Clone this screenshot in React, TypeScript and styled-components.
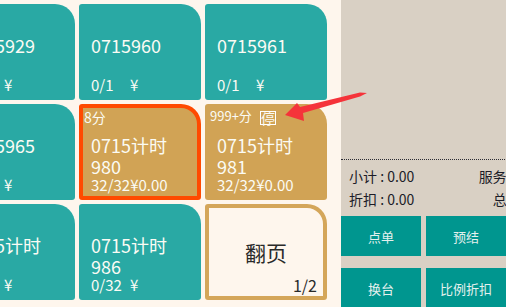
import React from "react";
import styled, { createGlobalStyle } from "styled-components";

type TableInfo = {
  id: string;
  lines: string[];
  count: string;
  amount?: string;
  busy?: boolean;
  selected?: boolean;
  minutes?: string;
  paused?: boolean;
};

const tables: TableInfo[] = [
  { id: "929", lines: ["0715929"], count: "0/1" },
  { id: "960", lines: ["0715960"], count: "0/1" },
  { id: "961", lines: ["0715961"], count: "0/1" },
  { id: "965", lines: ["0715965"], count: "0/1" },
  {
    id: "980",
    lines: ["0715计时", "980"],
    count: "32/32",
    amount: "0.00",
    busy: true,
    selected: true,
    minutes: "8分",
  },
  {
    id: "981",
    lines: ["0715计时", "981"],
    count: "32/32",
    amount: "0.00",
    busy: true,
    minutes: "999+分",
    paused: true,
  },
  { id: "985", lines: ["0715计时", "985"], count: "0/32" },
  { id: "986", lines: ["0715计时", "986"], count: "0/32" },
];

const actions = ["点单", "预结", "结账", "换台", "比例折扣", "更多"];

const TableTile: React.FC<{ table: TableInfo }> = ({ table }) => {
  const { lines, count, amount, busy, selected, minutes, paused } = table;
  const long = (minutes ?? "").length > 3;
  return (
    <Tile $busy={busy} $selected={selected}>
      <BadgeRow>
        {minutes && <Minutes $small={long}>{minutes}</Minutes>}
        {paused && <StopMark>停</StopMark>}
      </BadgeRow>
      <Name>
        {lines.map((line) => (
          <div key={line}>{line}</div>
        ))}
      </Name>
      <Footer>
        <Count>{count}</Count>
        <span>¥{amount}</span>
      </Footer>
    </Tile>
  );
};

const App: React.FC = () => {
  return (
    <>
      <GlobalStyle />
      <Screen>
        <TableArea>
          <TileGrid>
            {tables.map((t) => (
              <TableTile key={t.id} table={t} />
            ))}
            <PageTile>
              <PageLabel>翻页</PageLabel>
              <PageCount>1/2</PageCount>
            </PageTile>
          </TileGrid>
        </TableArea>

        <Panel>
          <PanelInner>
            <OrderList />
            <Summary>
              <span>小计 : 0.00</span>
              <RightCell>服务费 : 0.00</RightCell>
              <span>折扣 : 0.00</span>
              <RightCell>总计 : 0.00</RightCell>
            </Summary>
            <ActionGrid>
              {actions.map((a) => (
                <ActionButton key={a}>{a}</ActionButton>
              ))}
            </ActionGrid>
          </PanelInner>
        </Panel>

        <Pointer width="92" height="36" viewBox="0 0 92 36">
          <polygon
            points="5,27 17,15 20,19 80,4.5 87,5 80,8.5 23,25 24,33"
            fill="#f5333a"
          />
        </Pointer>
      </Screen>
    </>
  );
};

const GlobalStyle = createGlobalStyle`
  html, body {
    margin: 0;
    padding: 0;
    background: #fef6ed;
  }
  body {
    font-family: "Noto Sans CJK SC", "Noto Sans", sans-serif;
  }
`;

const Screen = styled.div`
  position: relative;
  display: flex;
  width: 506px;
  height: 307px;
  overflow: hidden;
  background: #fef6ed;
`;

const TableArea = styled.main`
  width: 341px;
  flex-shrink: 0;
  overflow: hidden;
`;

const TileGrid = styled.div`
  display: grid;
  grid-template-columns: repeat(3, 122px);
  grid-auto-rows: 96px;
  gap: 4px;
  padding-top: 4px;
  margin-left: -47px;
`;

const Tile = styled.div<{ $busy?: boolean; $selected?: boolean }>`
  box-sizing: border-box;
  display: flex;
  flex-direction: column;
  background: ${({ $busy }) => ($busy ? "#d1a355" : "#29a9a4")};
  border: 4px solid ${({ $selected }) => ($selected ? "#ff4a00" : "transparent")};
  border-radius: 3px 20px 3px 3px;
  padding: 0 2px 0 1px;
  color: #fbfbf4;
  overflow: hidden;
`;

const BadgeRow = styled.div`
  display: flex;
  align-items: flex-start;
  height: 21px;
  flex-shrink: 0;
`;

const Minutes = styled.span<{ $small?: boolean }>`
  font-size: ${({ $small }) => ($small ? "13px" : "14px")};
  line-height: ${({ $small }) => ($small ? "16px" : "19px")};
  white-space: nowrap;
`;

const StopMark = styled.span`
  box-sizing: content-box;
  width: 14px;
  height: 12px;
  margin: 3px 0 0 8px;
  border: 1px solid #ffffff;
  font-size: 14px;
  line-height: 12px;
  text-align: center;
`;

const Name = styled.div`
  margin-top: 6px;
  padding-left: 7px;
  font-size: 18px;
  line-height: 21px;
  white-space: nowrap;
`;

const Footer = styled.div`
  display: flex;
  margin-top: auto;
  padding: 0 0 4px 7px;
  font-size: 15px;
  line-height: 15px;
  white-space: nowrap;
`;

const Count = styled.span`
  min-width: 39px;
`;

const PageTile = styled.div`
  box-sizing: border-box;
  display: grid;
  background: #fef6ed;
  border: 4px solid #d4a65a;
  border-radius: 3px 20px 3px 3px;
  color: #2a2a2a;
`;

const PageLabel = styled.span`
  grid-area: 1 / 1;
  place-self: center;
  font-size: 21px;
  line-height: 24px;
`;

const PageCount = styled.span`
  grid-area: 1 / 1;
  align-self: end;
  justify-self: end;
  padding: 0 6px 3px 0;
  font-size: 16px;
  line-height: 16px;
`;

const Panel = styled.aside`
  flex: 1;
  background: #d9d0c4;
  overflow: hidden;
`;

const PanelInner = styled.div`
  width: 250px;
  display: flex;
  flex-direction: column;
`;

const OrderList = styled.div`
  height: 159px;
  border-bottom: 1px dotted #2b2b33;
`;

const Summary = styled.div`
  display: grid;
  grid-template-columns: 1fr auto;
  grid-auto-rows: 23px;
  padding: 5px 33px 0 8px;
  font-size: 14px;
  line-height: 23px;
  color: #1c1c28;
  white-space: nowrap;
`;

const RightCell = styled.span`
  text-align: right;
`;

const ActionGrid = styled.div`
  display: grid;
  grid-template-columns: repeat(3, 80px);
  grid-auto-rows: 40px;
  column-gap: 5px;
  row-gap: 12px;
  margin-top: 5px;
`;

const ActionButton = styled.div`
  display: flex;
  align-items: center;
  justify-content: center;
  background: #00968f;
  color: #e4f1ee;
  font-size: 13px;
`;

const Pointer = styled.svg`
  position: absolute;
  left: 280px;
  top: 88px;
  pointer-events: none;
`;

export default App;
